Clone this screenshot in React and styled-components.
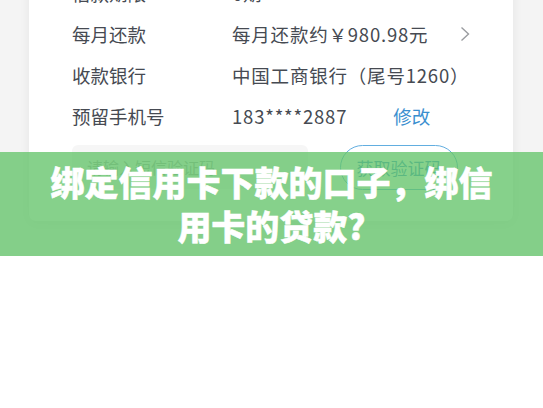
import styled, { createGlobalStyle } from "styled-components";

const GlobalStyle = createGlobalStyle`
  body {
    margin: 0;
    background: #ffffff;
    font-family: "Noto Sans CJK SC", "Noto Sans", sans-serif;
  }
`;

const Hero = styled.div`
  position: relative;
  height: 256px;
  overflow: hidden;
  background: #f4f4f4;
`;

const Card = styled.div`
  margin: -28px 30px 0 29px;
  padding: 0 43px 31px 43px;
  background: #ffffff;
  border-radius: 0 0 7px 7px;
  box-shadow: 0 2px 12px rgba(0, 0, 0, 0.06);
`;

const Row = styled.div`
  display: flex;
  align-items: center;
  height: 41px;
  font-size: 18.5px;
  color: #464a52;
`;

const Label = styled.span`
  width: 160px;
  flex-shrink: 0;
`;

const Value = styled.span`
  letter-spacing: 0.8px;
`;

const Link = styled.span`
  margin-left: 46px;
  color: #3b8fcf;
`;

const Chevron = styled.svg`
  margin-left: auto;
  width: 10px;
  height: 16px;
`;

const CodeRow = styled.div`
  display: flex;
  gap: 32px;
  margin-top: 9px;
`;

const Input = styled.div`
  width: 236px;
  height: 44px;
  box-sizing: border-box;
  padding-left: 15px;
  display: flex;
  align-items: center;
  background: #f6f6f6;
  border-radius: 6px;
  font-size: 16px;
  color: #a9abaf;
`;

const CodeButton = styled.div`
  width: 118px;
  height: 45px;
  box-sizing: border-box;
  display: flex;
  align-items: center;
  justify-content: center;
  border: 1.5px solid #62aee0;
  border-radius: 23px;
  font-size: 17px;
  color: #3d8fd0;
`;

const Banner = styled.div`
  position: absolute;
  left: 0;
  right: 0;
  bottom: 0;
  height: 104px;
  box-sizing: border-box;
  padding: 8px 36px 0;
  background: rgba(100, 196, 106, 0.78);
  color: #ffffff;
  font-size: 34px;
  font-weight: 900;
  line-height: 44px;
  text-align: center;
  -webkit-text-stroke: 0.5px #ffffff;
`;

const rows = [
  { label: "借款期限", value: "6期" },
  { label: "每月还款", value: "每月还款约￥980.98元", more: true },
  { label: "收款银行", value: "中国工商银行（尾号1260）" },
  { label: "预留手机号", value: "183****2887", action: "修改" },
];

export default function App() {
  return (
    <>
      <GlobalStyle />
      <Hero>
        <Card>
          {rows.map((r) => (
            <Row key={r.label}>
              <Label>{r.label}</Label>
              <Value>{r.value}</Value>
              {r.action && <Link>{r.action}</Link>}
              {r.more && (
                <Chevron viewBox="0 0 10 16">
                  <path d="M1.5 1.5l7 6.5-7 6.5" fill="none" stroke="#9a9ca0" strokeWidth="1.4" />
                </Chevron>
              )}
            </Row>
          ))}
          <CodeRow>
            <Input>请输入短信验证码</Input>
            <CodeButton>获取验证码</CodeButton>
          </CodeRow>
        </Card>
        <Banner>绑定信用卡下款的口子，绑信用卡的贷款?</Banner>
      </Hero>
    </>
  );
}
